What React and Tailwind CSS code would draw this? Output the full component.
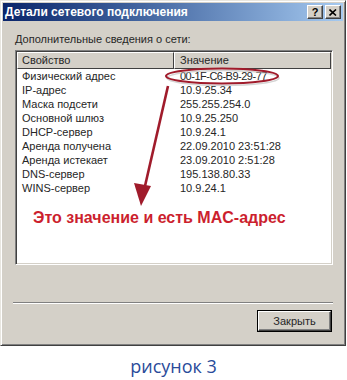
import React from 'react';

const rows = [
  ['Физический адрес', '00-1F-C6-B9-29-77'],
  ['IP-адрес', '10.9.25.34'],
  ['Маска подсети', '255.255.254.0'],
  ['Основной шлюз', '10.9.25.250'],
  ['DHCP-сервер', '10.9.24.1'],
  ['Аренда получена', '22.09.2010 23:51:28'],
  ['Аренда истекает', '23.09.2010 2:51:28'],
  ['DNS-сервер', '195.138.80.33'],
  ['WINS-сервер', '10.9.24.1'],
];

function CaptionButton({ children }) {
  return (
    <div className="w-[16px] h-[14px] bg-[#d4d0c8] border border-t-white border-l-white border-r-[#404040] border-b-[#404040] shadow-[inset_-1px_-1px_0_#808080] flex items-center justify-center">
      {children}
    </div>
  );
}

export default function App() {
  return (
    <div className="relative w-[347px] h-[380px] bg-white font-['Liberation_Sans',Arial,sans-serif] text-[#262626]">
      {/* dialog window */}
      <div className="w-[346px] h-[346px] bg-[#d4d0c8] border border-t-[#e8e6e0] border-l-[#e8e6e0] border-r-[#404040] border-b-[#404040] shadow-[inset_1px_1px_0_#fff,inset_-1px_-1px_0_#808080] p-[2px] flex flex-col">
        {/* title bar */}
        <div className="h-[18px] bg-gradient-to-r from-[#0a246a] to-[#a6caf0] flex items-center justify-between">
          <span className="pl-[2px] text-white font-bold text-[12px] leading-[18px]">Детали сетевого подключения</span>
          <div className="flex gap-[2px] mr-[2px]">
            <CaptionButton>
              <span className="font-bold text-[11px] leading-[11px] text-black">?</span>
            </CaptionButton>
            <CaptionButton>
              <svg width="8" height="7" viewBox="0 0 8 7">
                <path d="M0.5 0.5 L7 6.5 M7 0.5 L0.5 6.5" stroke="#000" strokeWidth="1.6" />
              </svg>
            </CaptionButton>
          </div>
        </div>

        <div className="ml-[12px] mt-[12px] text-[11px] leading-[13px]">Дополнительные сведения о сети:</div>

        {/* list view */}
        <div className="ml-[12px] mt-[4px] w-[318px] h-[215px] bg-white border border-t-[#808080] border-l-[#808080] border-r-white border-b-white shadow-[inset_1px_1px_0_#404040,inset_-1px_-1px_0_#d4d0c8] p-[1px] flex flex-col">
          <div className="flex h-[17px] text-[11px] leading-[15px]">
            <div className="w-[157px] bg-[#d4d0c8] border border-t-white border-l-white border-r-[#404040] border-b-[#404040] pl-[4px]">Свойство</div>
            <div className="flex-1 bg-[#d4d0c8] border border-t-white border-l-white border-r-[#404040] border-b-[#404040] pl-[5px]">Значение</div>
          </div>
          {rows.map(([k, v], i) => (
            <div key={k} className="flex h-[14px] text-[11px] leading-[14px]">
              <div className="w-[157px] pl-[5px]">{k}</div>
              <div className={i === 0 ? 'flex-1 pl-[6px] tracking-[-0.5px]' : 'flex-1 pl-[6px]'}>{v}</div>
            </div>
          ))}
          <div className="mt-[13px] ml-[16px] text-[16px] leading-[20px] font-bold text-[#cc1f2e]">Это значение и есть MAC-адрес</div>
        </div>

        {/* etched separator */}
        <div className="ml-[10px] mt-[37px] w-[320px] h-[2px] border-t border-t-[#808080] border-b border-b-white" />

        <div className="flex justify-end mr-[11px] mt-[6px]">
          <div className="w-[75px] h-[22px] border border-black">
            <div className="w-full h-full bg-[#d4d0c8] border border-t-white border-l-white border-r-[#404040] border-b-[#404040] shadow-[inset_-1px_-1px_0_#808080] flex items-center justify-center text-[11px]">
              Закрыть
            </div>
          </div>
        </div>
      </div>

      {/* caption */}
      <div className="mt-[5px] h-[29px] flex items-center justify-center font-['Open_Sans',sans-serif] text-[18px] text-[#2a4b9a] leading-[22px]">
        рисунок 3
      </div>

      {/* red annotation: ellipse + arrow */}
      <svg className="absolute left-0 top-0 pointer-events-none" width="347" height="380">
        <ellipse cx="223" cy="78" rx="56" ry="7.5" fill="none" stroke="#b8b8b8" strokeWidth="1.5" opacity="0.6" />
        <ellipse cx="222" cy="76" rx="56" ry="7.5" fill="none" stroke="#a01b2b" strokeWidth="2" />
        <path d="M168 86 L145 186" stroke="#a01b2b" strokeWidth="2.6" />
        <path d="M141 206 L134 183 L151 186 Z" fill="#a01b2b" />
      </svg>
    </div>
  );
}
